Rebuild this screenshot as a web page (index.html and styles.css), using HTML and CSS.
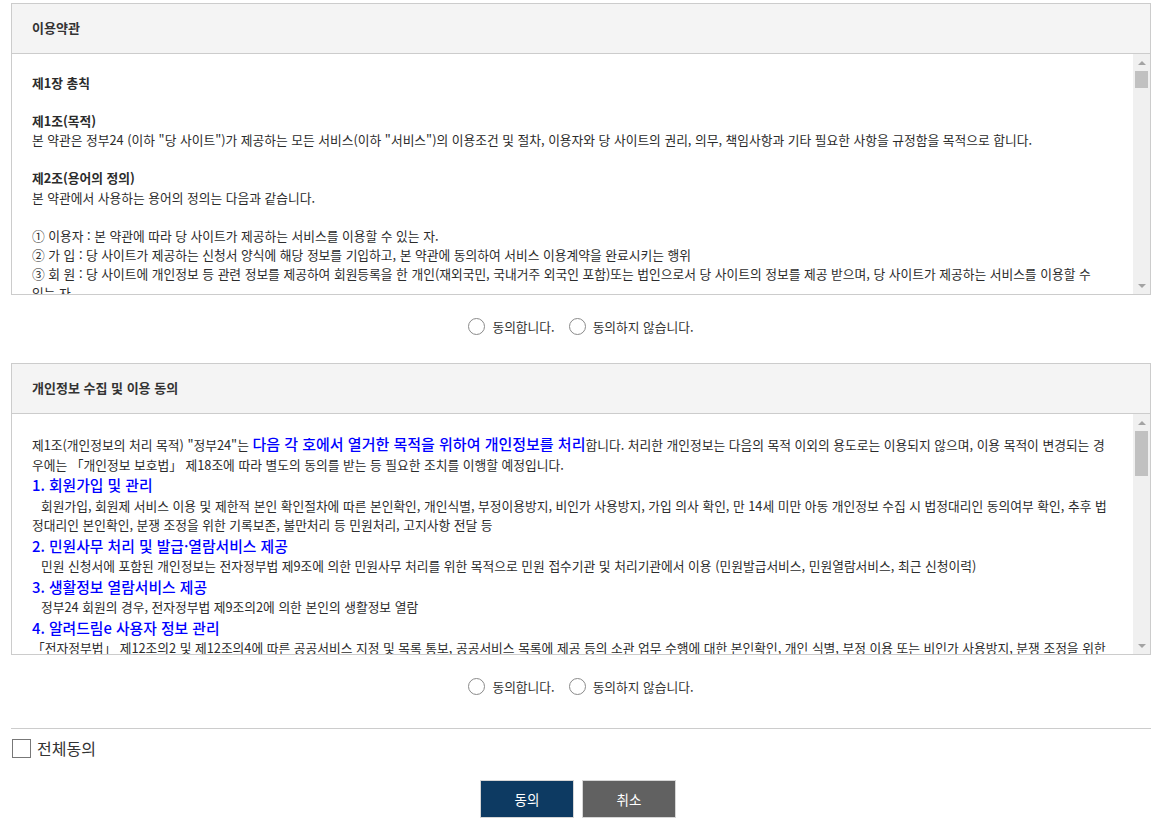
FILE: index.html
```html
<!DOCTYPE html>
<html lang="ko">
<head>
<meta charset="utf-8">
<title>이용약관 동의</title>
<link rel="stylesheet" href="styles.css">
</head>
<body>
<div class="page">
  <section class="panel">
    <h2 class="panel-title">이용약관</h2>
    <div class="panel-body terms">
      <div class="scroll-content">
        <p class="chapter">제1장 총칙</p>
        <div class="article">
          <p class="art-title">제1조(목적)</p>
          <p>본 약관은 정부24 (이하 "당 사이트")가 제공하는 모든 서비스(이하 "서비스")의 이용조건 및 절차, 이용자와 당 사이트의 권리, 의무, 책임사항과 기타 필요한 사항을 규정함을 목적으로 합니다.</p>
        </div>
        <div class="article">
          <p class="art-title">제2조(용어의 정의)</p>
          <p>본 약관에서 사용하는 용어의 정의는 다음과 같습니다.</p>
          <p class="blank">&nbsp;</p>
          <p>① 이용자 : 본 약관에 따라 당 사이트가 제공하는 서비스를 이용할 수 있는 자.</p>
          <p>② 가 입 : 당 사이트가 제공하는 신청서 양식에 해당 정보를 기입하고, 본 약관에 동의하여 서비스 이용계약을 완료시키는 행위</p>
          <p>③ 회 원 : 당 사이트에 개인정보 등 관련 정보를 제공하여 회원등록을 한 개인(재외국민, 국내거주 외국인 포함)또는 법인으로서 당 사이트의 정보를 제공 받으며, 당 사이트가 제공하는 서비스를 이용할 수 있는 자.</p>
          <p>④ 아이디(ID) : 회원의 식별과 서비스 이용을 위하여 회원이 선정하고 당 사이트가 승인하는 문자와 숫자의 조합</p>
          <p>⑤ 비밀번호(Password) : 회원의 정보 보호를 위해 이용자 자신이 설정한 문자, 숫자 및 특수문자의 조합</p>
          <p>⑥ 탈 퇴 : 회원이 이용계약을 종료시키는 행위</p>
        </div>
        <div class="article">
          <p class="art-title">제3조(약관의 효력과 변경)</p>
          <p>① 당 사이트는 이용자가 본 약관 내용에 동의하는 것을 조건으로 이용자에게 서비스를 제공하며, 당 사이트의 서비스 제공 행위 및 이용자의 서비스 사용 행위에는 본 약관이 우선적으로 적용됩니다.</p>
          <p>② 당 사이트는 본 약관을 사전 고지 없이 변경할 수 있으며, 변경된 약관은 당 사이트 내에 공지함으로써 이용자가 직접 확인하도록 할 것입니다.</p>
        </div>
      </div>
      <div class="scrollbar" aria-hidden="true">
        <span class="sb-btn"><span class="sb-up"></span></span>
        <span class="sb-thumb"></span>
        <span class="sb-track"></span>
        <span class="sb-btn"><span class="sb-down"></span></span>
      </div>
    </div>
  </section>

  <div class="choice">
    <label class="radio"><input type="radio" name="agree1"><span>동의합니다.</span></label>
    <label class="radio"><input type="radio" name="agree1"><span>동의하지 않습니다.</span></label>
  </div>

  <section class="panel">
    <h2 class="panel-title">개인정보 수집 및 이용 동의</h2>
    <div class="panel-body privacy">
      <div class="scroll-content">
        <p>제1조(개인정보의 처리 목적) "정부24"는 <span class="em">다음 각 호에서 열거한 목적을 위하여 개인정보를 처리</span>합니다. 처리한 개인정보는 다음의 목적 이외의 용도로는 이용되지 않으며, 이용 목적이 변경되는 경우에는 「개인정보 보호법」 제18조에 따라 별도의 동의를 받는 등 필요한 조치를 이행할 예정입니다.</p>
        <p class="item">1. 회원가입 및 관리</p>
        <p class="desc">회원가입, 회원제 서비스 이용 및 제한적 본인 확인절차에 따른 본인확인, 개인식별, 부정이용방지, 비인가 사용방지, 가입 의사 확인, 만 14세 미만 아동 개인정보 수집 시 법정대리인 동의여부 확인, 추후 법정대리인 본인확인, 분쟁 조정을 위한 기록보존, 불만처리 등 민원처리, 고지사항 전달 등</p>
        <p class="item">2. 민원사무 처리 및 발급·열람서비스 제공</p>
        <p class="desc">민원 신청서에 포함된 개인정보는 전자정부법 제9조에 의한 민원사무 처리를 위한 목적으로 민원 접수기관 및 처리기관에서 이용 (민원발급서비스, 민원열람서비스, 최근 신청이력)</p>
        <p class="item">3. 생활정보 열람서비스 제공</p>
        <p class="desc">정부24 회원의 경우, 전자정부법 제9조의2에 의한 본인의 생활정보 열람</p>
        <p class="item">4. 알려드림e 사용자 정보 관리</p>
        <p>「전자정부법」 제12조의2 및 제12조의4에 따른 공공서비스 지정 및 목록 통보, 공공서비스 목록에 제공 등의 소관 업무 수행에 대한 본인확인, 개인 식별, 부정 이용 또는 비인가 사용방지, 분쟁 조정을 위한 기록보존, 불만처리 등 민원처리, 고지사항 전달 등</p>
        <p class="item">5. 맞춤형 서비스 안내</p>
        <p class="desc">회원의 생애주기, 관심분야 등에 따른 맞춤형 행정서비스 및 혜택 정보 안내, 서비스 이용 통계 분석</p>
      </div>
      <div class="scrollbar" aria-hidden="true">
        <span class="sb-btn"><span class="sb-up"></span></span>
        <span class="sb-thumb"></span>
        <span class="sb-track"></span>
        <span class="sb-btn"><span class="sb-down"></span></span>
      </div>
    </div>
  </section>

  <div class="choice">
    <label class="radio"><input type="radio" name="agree2"><span>동의합니다.</span></label>
    <label class="radio"><input type="radio" name="agree2"><span>동의하지 않습니다.</span></label>
  </div>

  <div class="all-agree">
    <label class="check"><input type="checkbox"><span>전체동의</span></label>
  </div>

  <div class="buttons">
    <button type="button" class="btn btn-primary">동의</button>
    <button type="button" class="btn btn-cancel">취소</button>
  </div>
</div>
</body>
</html>
```

FILE: styles.css
```css
html, body {
  margin: 0;
  padding: 0;
  background: #fff;
}

body {
  font-family: "Noto Sans CJK KR", "Malgun Gothic", "Liberation Sans", sans-serif;
  font-size: 12.75px;
  color: #2b2b2b;
}

.page {
  padding: 3px 16px 0 11px;
}

p {
  margin: 0;
}

.panel {
  border: 1px solid #ccc;
}

.panel-title {
  margin: 0;
  height: 49px;
  line-height: 48px;
  padding: 0 20px;
  background: #f4f4f4;
  border-bottom: 1px solid #ccc;
  font-size: 13px;
  font-weight: bold;
  color: #333;
}

.panel-body {
  display: flex;
  height: 240px;
}

.scroll-content {
  flex: 1;
  min-width: 0;
  overflow: hidden;
  padding: 20px 20px 0 20px;
  word-break: break-all;
}

.terms .scroll-content {
  padding-top: 19px;
  line-height: 19.1px;
  word-break: keep-all;
}

.privacy .scroll-content {
  padding-top: 21px;
  line-height: 19.5px;
}

/* static scrollbar drawn beside the clipped text */
.scrollbar {
  width: 17px;
  flex: none;
  display: flex;
  flex-direction: column;
  background: #f0f0f0;
}

.sb-btn {
  height: 17px;
  flex: none;
  display: flex;
  align-items: center;
  justify-content: center;
}

.sb-up {
  width: 0;
  height: 0;
  border-left: 4px solid transparent;
  border-right: 4px solid transparent;
  border-bottom: 4px solid #a3a3a3;
}

.sb-down {
  width: 0;
  height: 0;
  border-left: 4px solid transparent;
  border-right: 4px solid transparent;
  border-top: 4px solid #a3a3a3;
}

.sb-thumb {
  flex: none;
  margin: 0 2px;
  background: #c1c1c1;
}

.terms .sb-thumb {
  height: 17px;
}

.privacy .sb-thumb {
  height: 45px;
}

.sb-track {
  flex: 1;
}

.chapter {
  font-weight: bold;
  margin-bottom: 19.1px;
}

.article {
  margin-bottom: 19.1px;
}

.art-title {
  font-weight: bold;
}

.em {
  font-size: 15px;
  font-weight: 500;
  color: #0000ff;
  line-height: 1;
}

.item {
  font-size: 14.8px;
  line-height: 21.5px;
  font-weight: 500;
  color: #0000ff;
}

.desc {
  text-indent: 9px;
}

.choice {
  display: flex;
  justify-content: center;
  gap: 14px;
  padding: 23px 0 28px;
}

.choice + .all-agree {
  border-top: 1px solid #ccc;
}

.radio {
  display: flex;
  align-items: center;
  gap: 7px;
  height: 17px;
  line-height: 17px;
  color: #333;
}

.radio input {
  appearance: none;
  -webkit-appearance: none;
  margin: 0;
  width: 17px;
  height: 17px;
  border: 1px solid #8a8a8a;
  border-radius: 50%;
  background: #fff;
  box-sizing: border-box;
}

.radio input:checked {
  background: radial-gradient(circle, #333 35%, #fff 40%);
}

.all-agree {
  margin-top: 5px;
  padding-top: 10px;
}

.check {
  display: flex;
  align-items: center;
  gap: 6px;
  height: 19px;
  line-height: 19px;
  margin-left: 1px;
  font-size: 16px;
  color: #333;
}

.check input {
  appearance: none;
  -webkit-appearance: none;
  margin: 0;
  width: 19px;
  height: 19px;
  border: 1px solid #777;
  background: #fff;
  box-sizing: border-box;
}

.buttons {
  display: flex;
  justify-content: center;
  gap: 8px;
  margin-top: 22px;
  padding-right: 6px;
}

.btn {
  width: 94px;
  height: 38px;
  border: 1px solid #d6d6d6;
  font-family: inherit;
  font-size: 13.5px;
  color: #fff;
  padding: 0;
  cursor: pointer;
}

.btn-primary {
  background: #0d3a62;
}

.btn-cancel {
  background: #616161;
}
```
